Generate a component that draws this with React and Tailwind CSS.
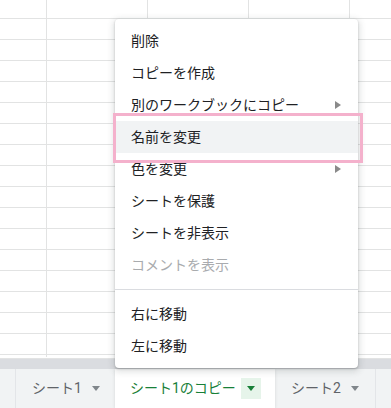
import React from 'react';

const font = { fontFamily: 'Roboto, "Noto Sans CJK JP", sans-serif' };

const items = [
    { label: '削除' },
    { label: 'コピーを作成' },
    { label: '別のワークブックにコピー', sub: true },
    { label: '名前を変更', active: true },
    { label: '色を変更', sub: true },
    { label: 'シートを保護' },
    { label: 'シートを非表示' },
    { label: 'コメントを表示', disabled: true },
    { divider: true },
    { label: '右に移動' },
    { label: '左に移動' },
];

function Caret({ className }) {
    return (
        <svg width="8" height="5" viewBox="0 0 8 5" className={className}>
            <path d="M0 0h8L4 5z" fill="currentColor" />
        </svg>
    );
}

function SubArrow() {
    return (
        <svg width="6" height="8" viewBox="0 0 6 8" className="text-[#8a8a8a]">
            <path d="M0 0l6 4-6 4z" fill="currentColor" />
        </svg>
    );
}

function Grid() {
    const rows = Array.from({ length: 18 });
    const cols = Array.from({ length: 4 });
    return (
        <div className="flex-1 overflow-hidden bg-white">
            {rows.map((_, r) => (
                <div key={r} className={`flex border-b border-[#e2e3e3] ${r === 0 ? 'h-[19px]' : 'h-[21px]'}`}>
                    <div className="w-[47px] shrink-0 border-r border-[#e2e3e3]" />
                    {cols.map((_, c) => (
                        <div key={c} className="w-[101px] shrink-0 border-r border-[#e2e3e3]" />
                    ))}
                </div>
            ))}
        </div>
    );
}

function Menu() {
    return (
        <div className="absolute left-[115px] top-[19px] w-[243px] rounded bg-white py-[6px] shadow-[0_2px_6px_2px_rgba(60,64,67,0.15),0_1px_2px_rgba(60,64,67,0.3)]">
            {items.map((it, i) =>
                it.divider ? (
                    <div key={i} className="py-[8px]">
                        <div className="mx-[0px] h-px bg-[#dadce0]" />
                    </div>
                ) : (
                    <div
                        key={i}
                        className={`flex h-[32px] items-center justify-between pl-[16px] pr-[17px] text-[14px] ${
                            it.active ? 'bg-[#f1f3f4]' : ''
                        } ${it.disabled ? 'text-[#a9abae]' : 'text-[#202124]'}`}
                    >
                        <span>{it.label}</span>
                        {it.sub && <SubArrow />}
                    </div>
                )
            )}
        </div>
    );
}

function Tabs() {
    return (
        <div className="flex h-[39px] shrink-0 bg-[#f1f3f4] text-[14px]">
            <div className="w-[16px] border-r border-[#e3e5e8]" />
            <div className="flex w-[99px] items-center gap-[10px] pl-[16px] text-[#5f6368]">
                <span>シート1</span>
                <Caret className="text-[#80868b]" />
            </div>
            <div className="flex w-[160px] items-center bg-white pl-[15px] text-[#188038] shadow-[0_1px_3px_rgba(60,64,67,0.15)]">
                <span>シート1のコピー</span>
                <span className="ml-[5px] flex h-[21px] w-[20px] items-center justify-center bg-[#e6f4ea]">
                    <Caret className="text-[#188038]" />
                </span>
            </div>
            <div className="flex w-[101px] items-center gap-[10px] border-r border-[#e3e5e8] pl-[16px] text-[#5f6368]">
                <span>シート2</span>
                <Caret className="text-[#80868b]" />
            </div>
        </div>
    );
}

export default function App() {
    return (
        <div className="relative flex h-[408px] w-[391px] flex-col overflow-hidden bg-white" style={font}>
            <Grid />
            <div className="h-[2px] shrink-0 border-b border-[#e2e3e3] bg-white" />
            <div className="h-[10px] shrink-0 bg-[#dadce0]" />
            <Tabs />
            <Menu />
            <div className="pointer-events-none absolute left-[113px] top-[113px] h-[50px] w-[250px] border-[3px] border-[#f4b1cc]" />
        </div>
    );
}
